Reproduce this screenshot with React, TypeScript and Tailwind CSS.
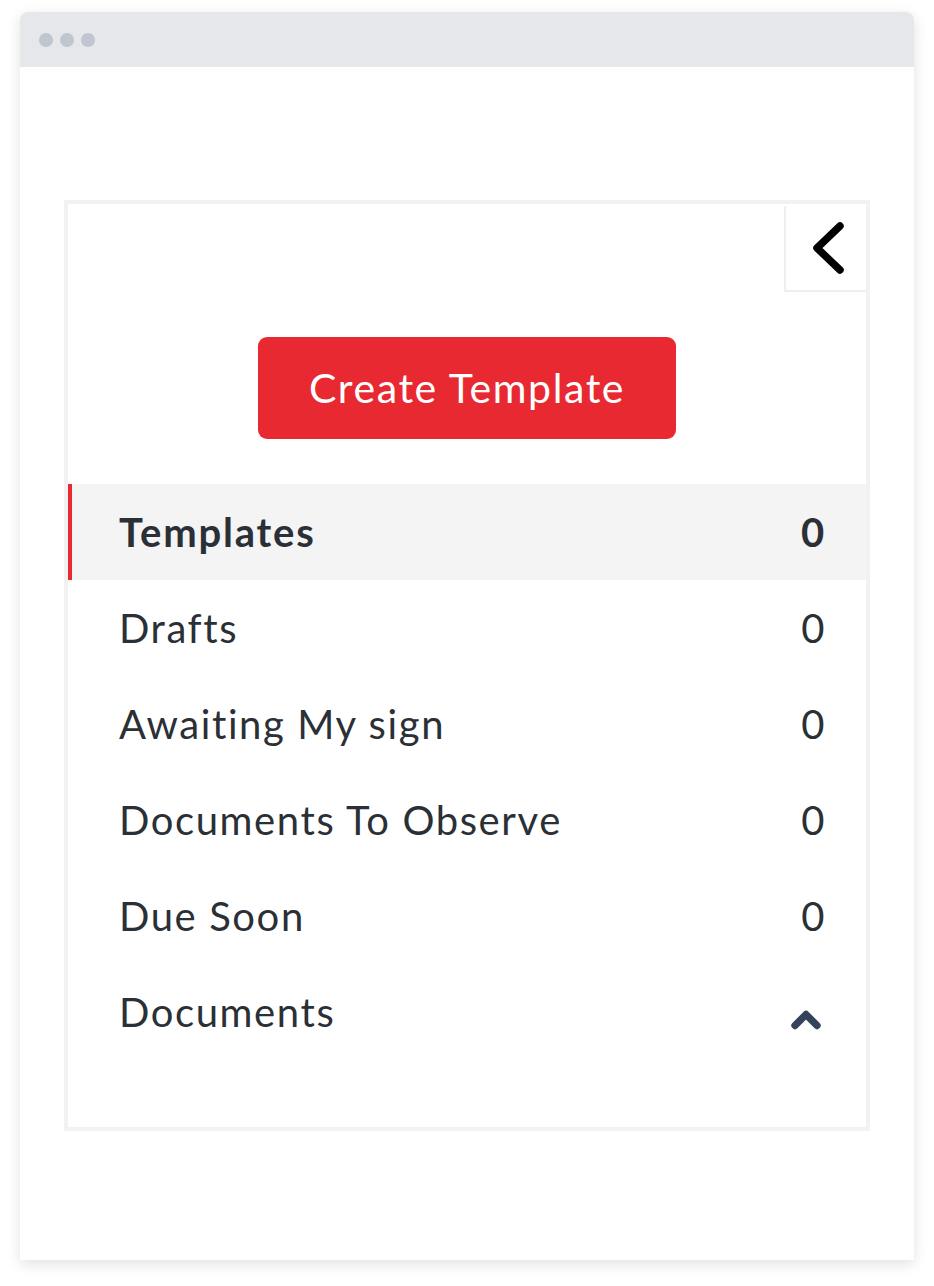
import { ChevronUp } from 'lucide-react';

type NavItem = {
  label: string;
  count?: number;
  active?: boolean;
};

const items: NavItem[] = [
  { label: 'Templates', count: 0, active: true },
  { label: 'Drafts', count: 0 },
  { label: 'Awaiting My sign', count: 0 },
  { label: 'Documents To Observe', count: 0 },
  { label: 'Due Soon', count: 0 },
];

export default function App() {
  return (
    <div className="min-h-[1286px] w-[934px] bg-white pt-3 pl-5 font-['Lato','Noto_Sans',sans-serif]">
      <div className="flex h-[1248px] w-[894px] flex-col overflow-hidden rounded-t-lg bg-white shadow-[0_4px_14px_rgba(0,0,0,0.12)]">
        <div className="flex h-[55px] shrink-0 items-center gap-[7px] bg-[#e5e7eb] pl-[19px]">
          <span className="h-[14px] w-[14px] rounded-full bg-[#c0c6cf]" />
          <span className="h-[14px] w-[14px] rounded-full bg-[#c0c6cf]" />
          <span className="h-[14px] w-[14px] rounded-full bg-[#c0c6cf]" />
        </div>

        <div className="pt-[133px] pl-[44px]">
          <div className="w-[806px] border-[4px] border-[#f2f2f2] bg-white">
            <div className="flex justify-end pt-[2px]">
              <button className="flex h-[86px] w-[82px] items-center justify-center border-b-2 border-l-2 border-[#efefef] bg-white">
                <svg width="40" height="58" viewBox="0 0 40 58" fill="none" className="ml-[6px] shrink-0">
                  <polyline
                    points="31,7 8,29 31,51"
                    stroke="#000"
                    strokeWidth="7.5"
                    strokeLinecap="round"
                    strokeLinejoin="round"
                  />
                </svg>
              </button>
            </div>

            <div className="flex justify-center pt-[45px] pb-[45px]">
              <button className="h-[102px] w-[418px] rounded-[9px] bg-[#e92932] text-[41px] tracking-[1.6px] text-white">
                Create Template
              </button>
            </div>

            <ul className="pb-[67px] text-[#2b2f36]">
              {items.map((item) => (
                <li
                  key={item.label}
                  className={
                    item.active
                      ? 'flex h-[96px] items-center justify-between border-l-[4px] border-[#e92932] bg-[#f4f4f4] pr-[40px] pl-[47px] text-[40px] font-bold tracking-[1.8px]'
                      : 'flex h-[96px] items-center justify-between pr-[40px] pl-[51px] text-[40px] tracking-[1.6px]'
                  }
                >
                  <span>{item.label}</span>
                  <span>{item.count}</span>
                </li>
              ))}
              <li className="flex h-[96px] items-center justify-between pr-[38px] pl-[51px] text-[40px] tracking-[1.6px]">
                <span>Documents</span>
                <ChevronUp size={44} strokeWidth={4} className="mt-4 text-[#35435a]" />
              </li>
            </ul>
          </div>
        </div>
      </div>
    </div>
  );
}
